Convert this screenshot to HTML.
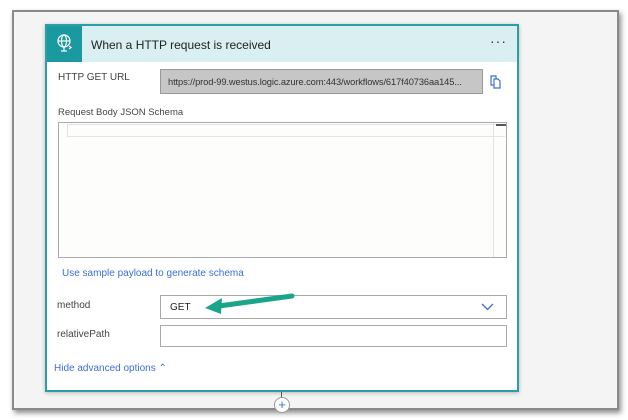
<!DOCTYPE html>
<html><head><style>
*{box-sizing:border-box;margin:0;padding:0}
body{width:628px;height:420px;background:#fff;position:relative;overflow:hidden;font-family:"Liberation Sans",sans-serif;color:#333}
.frame{position:absolute;left:12px;top:10px;width:607px;height:400px;background:#f4f4f4;border:2px solid #8a8a8a;box-shadow:2px 3px 5px rgba(0,0,0,.45)}
.card{position:absolute;left:45px;top:24px;width:474px;height:368px;background:#fff;border:2px solid #2a9fa5;box-shadow:0 1px 4px rgba(0,0,0,.25)}
.hdr{position:absolute;left:0;top:0;width:470px;height:36px;background:#d9eff1}
.ico{position:absolute;left:0;top:0;width:35px;height:36px;background:#1a9aa0}
.title{position:absolute;left:44px;top:12px;font-size:12px;color:#222}
.dots{position:absolute;right:10px;top:7px;font-size:14px;letter-spacing:1px;color:#333}
.lbl{position:absolute;font-size:10px;color:#444}
.box{position:absolute;border:1px solid #aaa;background:#fff}
.link{position:absolute;font-size:10px;color:#3b6fd8}
</style></head><body>
<div class="frame"></div>
<div class="card">
 <div class="hdr">
  <div class="ico"><svg width="35" height="36" viewBox="0 0 35 36"><g fill="none" stroke="#fff" stroke-width="1.2"><circle cx="17" cy="15" r="6"/><ellipse cx="17" cy="15" rx="2.5" ry="6"/><line x1="11" y1="15" x2="23" y2="15"/><line x1="17" y1="21" x2="17" y2="25"/><line x1="14" y1="25" x2="20" y2="25"/><path d="M22 20l2 1.5-2 1.5"/></g></svg></div>
  <div class="title">When a HTTP request is received</div>
  <div class="dots">···</div>
 </div>
 <div class="lbl" style="left:11px;top:46px">HTTP GET URL</div>
 <div class="box" style="left:113px;top:43px;width:323px;height:25px;background:#c6c6c6;border-color:#999;font-size:9.3px;padding:7px 0 0 7px;color:#333;white-space:nowrap;overflow:hidden;letter-spacing:-0.1px">https://prod-99.westus.logic.azure.com:443/workflows/617f40736aa145...</div>
 <svg style="position:absolute;left:443px;top:49px" width="12" height="14" viewBox="0 0 12 14"><g fill="none" stroke="#3b6fd8" stroke-width="1.2"><path d="M1 1h5v9H1z"/><path d="M4 4h4l2 2v7H4z" fill="#fff"/></g></svg>
 <div class="lbl" style="left:11px;top:81px;font-size:9.5px">Request Body JSON Schema</div>
 <div class="box" style="left:11px;top:96px;width:449px;height:136px;background:#fdfdfb">
  <div style="position:absolute;left:8px;top:1px;width:438px;height:13px;border:1px solid #e3e3e3;border-right:none"></div>
  <div style="position:absolute;left:434px;top:0;width:1px;height:134px;background:#e3e3e3"></div>
  <div style="position:absolute;left:437px;top:1px;width:10px;height:2px;background:#555"></div>
 </div>
 <div class="link" style="left:15px;top:242px">Use sample payload to generate schema</div>
 <div class="lbl" style="left:10px;top:274px">method</div>
 <div class="box" style="left:113px;top:269px;width:347px;height:24px;font-size:10px;padding:6px 0 0 9px;color:#222">GET
  <svg style="position:absolute;right:12px;top:7px" width="13" height="8" viewBox="0 0 13 8"><path d="M1 1l5.5 5.5L12 1" fill="none" stroke="#3b6fd8" stroke-width="1.3"/></svg></div>
 <svg style="position:absolute;left:150px;top:264px" width="100" height="30" viewBox="0 0 100 30"><path d="M95 6L22 16" stroke="#1aa58a" stroke-width="5" stroke-linecap="round"/><path d="M8 18L25 8L24 24Z" fill="#1aa58a"/></svg>
 <div class="lbl" style="left:10px;top:303px">relativePath</div>
 <div class="box" style="left:113px;top:299px;width:347px;height:22px"></div>
 <div class="link" style="left:7px;top:337px">Hide advanced options <span style="color:#3b6fd8">&#8963;</span></div>
</div>
<div style="position:absolute;left:281px;top:392px;width:1px;height:6px;background:#555"></div>
<div style="position:absolute;left:274px;top:397px;width:16px;height:16px;border-radius:50%;background:#fff;border:1px solid #999;font-size:13px;line-height:14px;text-align:center;color:#3b6fd8">+</div>
</body></html>
